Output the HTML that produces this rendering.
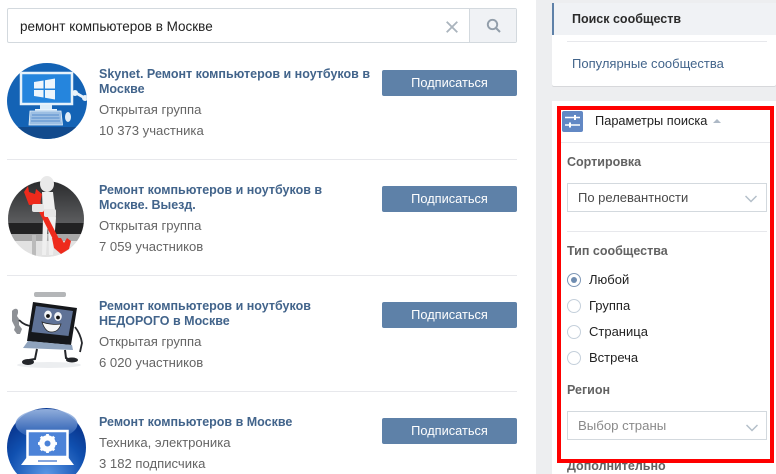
<!DOCTYPE html>
<html><head><meta charset="utf-8">
<style>
html,body{margin:0;padding:0}
body{width:776px;height:474px;overflow:hidden;background:#edeef0;position:relative;font-family:"Liberation Sans",sans-serif;font-size:12.5px}
.a{position:absolute;white-space:nowrap}
.n{position:absolute;left:99px;font-weight:bold;color:#42648b;font-size:12.5px;line-height:15px;white-space:nowrap}
.s{position:absolute;left:99px;color:#656565;font-size:13.1px;line-height:15px;white-space:nowrap}
.b{position:absolute;left:382px;width:135px;height:26px;background:#5e81a8;border-radius:2px;color:#fff;font-size:12.8px;line-height:26px;text-align:center}
.l{position:absolute;background:#e7e8ec;height:1px}
.h{position:absolute;left:567px;font-weight:bold;color:#626262;font-size:12.5px;line-height:15px;white-space:nowrap}
.sel{position:absolute;left:567px;width:198px;height:27px;background:#fff;border:1px solid #d3d9de}
.r{position:absolute;left:567px;width:14px;height:14px;box-sizing:border-box;border:1px solid #c5d0db;border-radius:50%;background:#fff}
.t{position:absolute;left:589px;color:#222;font-size:13px;line-height:15px;white-space:nowrap}
svg{position:absolute;overflow:hidden}
</style></head><body>
<div class="a" style="left:0;top:0;width:536px;height:474px;background:#fff"></div>
<div class="a" style="left:552px;top:3px;width:224px;height:83px;background:#fff;border-radius:2px;box-shadow:0 1px 0 #d7d8db"></div>
<div class="a" style="left:552px;top:101px;width:224px;height:373px;background:#fff"></div>

<div class="a" style="left:7px;top:8px;width:508px;height:33px;border:1px solid #d3d9de;background:#fff;border-radius:2px"></div>
<div class="a" style="left:469px;top:9px;width:46px;height:33px;background:#f0f2f5;border-left:1px solid #d3d9de"></div>
<div class="a" style="left:20px;top:19px;color:#222;font-size:13.5px;line-height:16px">ремонт компьютеров в Москве</div>
<svg style="left:446px;top:21px" width="12" height="12" viewBox="0 0 12 12"><path d="M.7.7L11.300 11.300M11.300.7L.7 11.300" stroke="#aab4bd" stroke-width="1.800" fill="none"/></svg>
<svg style="left:486px;top:18px" width="16" height="16" viewBox="0 0 16 16"><circle cx="6.500" cy="6.500" r="4.700" stroke="#929eaa" stroke-width="1.900" fill="none"/><path d="M10 10L14 14" stroke="#929eaa" stroke-width="2" fill="none"/></svg>

<!-- avatar 1 -->
<svg style="left:7px;top:63px" width="80" height="76" viewBox="0 0 80 76">
<defs><clipPath id="c1"><ellipse cx="40" cy="38" rx="40" ry="38"/></clipPath></defs>
<g clip-path="url(#c1)"><rect width="80" height="76" fill="#1463b5"/><rect x="0" y="64" width="80" height="12" fill="#124a8c"/>
<rect x="14" y="10" width="51" height="31" fill="#2585dd" stroke="#e6f2fb" stroke-width="2.500"/>
<path d="M27 19l9.500-1.500v8H27zM38 17.200L48 15.500v10H38zM27 27h9.500v7.500L27 33zM38 27h10v9.500l-10-1.700z" fill="#eef6fc"/>
<rect x="33" y="42" width="12" height="4" fill="#dcecf8"/><rect x="28" y="46" width="22" height="1.500" fill="#e6f2fb"/>
<path d="M23 48h31l1.500 14H22z" fill="#9dbfe3" stroke="#e6f2fb" stroke-width=".8"/>
<path d="M25 52h27M24.500 55h28M24 58h29" stroke="#3f7ec8" stroke-width=".7"/>
<ellipse cx="61" cy="54" rx="3" ry="5" fill="#e2eef8"/>
<path d="M69 30l7 4" stroke="#e8f2fa" stroke-width="2.800"/><circle cx="68" cy="30" r="3" fill="#e8f2fa"/><circle cx="78" cy="35" r="3" fill="#e8f2fa"/></g>
</svg>
<!-- avatar 2 -->
<svg style="left:7px;top:175px" width="80" height="82" viewBox="0 0 80 82">
<defs><clipPath id="c2"><circle cx="39" cy="44" r="38"/></clipPath>
<linearGradient id="sc" x1="0" y1="0" x2="0" y2="1"><stop offset="0" stop-color="#2a2b2d"/><stop offset="1" stop-color="#5c5d5f"/></linearGradient></defs>
<g clip-path="url(#c2)"><rect y="6" width="80" height="76" fill="#e8e8e8"/><rect y="6" width="80" height="42" fill="url(#sc)"/>
<rect y="48" width="80" height="11" fill="#222223"/><rect y="59" width="80" height="7" fill="#a8a8a8"/><rect y="66" width="80" height="16" fill="#e2e2e2"/>
<rect x="25" y="60" width="4" height="22" fill="#bbb"/></g>
<ellipse cx="40" cy="9" rx="7" ry="8" fill="#e9e9e9"/>
<path d="M35 17h11l3 26-3 37h-4l-1-32-2 32h-4l1-37z" fill="#efefef"/>
<path d="M27 21l24 47" stroke="#ee2a1c" stroke-width="5.500" fill="none"/>
<path d="M17 17l4-6 1 6 6 2 1-5 6 5-2 10-11 1z" fill="#ee2a1c"/>
<path d="M45 63l9 0 3 5 3-5 4 3-2 8-8 5-7-6z" fill="#ee2a1c"/>
<rect x="25" y="29" width="12" height="8" rx="2" fill="#e6e6e6"/><rect x="37" y="34" width="12" height="8" rx="2" fill="#e6e6e6"/>
</svg>
<!-- avatar 3 -->
<svg style="left:7px;top:291px" width="80" height="80" viewBox="0 0 80 80">
<rect x="27" y="1" width="32" height="5" rx="2" fill="#b4b6b8"/>
<ellipse cx="42" cy="74" rx="32" ry="3" fill="#eceef0"/>
<path d="M5 20c2-3 6-3 6 0v2l-1 3 2 3v6l3 4-2 5-3 0-3-4 1-3-3-6z" fill="#8e9196"/>
<path d="M12 29c4 4 8 6 13 6" stroke="#26282c" stroke-width="1.800" fill="none"/>
<path d="M68 36c4 5 6 10 7 16l-2 9" stroke="#26282c" stroke-width="1.800" fill="none"/>
<path d="M26 11l44 6-6 37-44-4z" fill="#15171b"/><path d="M29 15l37 5-4.500 25-37-4z" fill="#5f7296"/>
<path d="M21 50l44 4 1 5-50-2z" fill="#8fa3bd"/>
<ellipse cx="41" cy="24" rx="3.800" ry="4.500" fill="#f1f3f5"/><ellipse cx="51" cy="25.500" rx="3.800" ry="4.500" fill="#f1f3f5"/><circle cx="41" cy="25" r="1.900" fill="#111"/><circle cx="51" cy="26.500" r="1.900" fill="#111"/>
<path d="M35 31c5 2 13 3 19 2-2 6-5 8-10 8-4 0-7-4-9-10z" fill="#f6f6f6" stroke="#222" stroke-width=".7"/>
<path d="M30 58l-2 10-6 1M58 59l1 8 5 2" stroke="#24262a" stroke-width="2" fill="none"/><ellipse cx="21" cy="71" rx="6" ry="3" fill="#24262a"/><ellipse cx="65" cy="69" rx="6" ry="2.500" fill="#24262a"/>
</svg>
<!-- avatar 4 -->
<svg style="left:7px;top:407px" width="80" height="67" viewBox="0 0 80 67">
<defs><radialGradient id="g4" cx=".5" cy=".85" r=".7"><stop offset="0" stop-color="#5c98e6"/><stop offset=".7" stop-color="#1050b0"/><stop offset="1" stop-color="#0a3a94"/></radialGradient>
<linearGradient id="g5" x1="0" y1="0" x2="0" y2="1"><stop offset="0" stop-color="#a9c2e8"/><stop offset="1" stop-color="#1d55b0"/></linearGradient></defs>
<circle cx="39.500" cy="40.500" r="39.500" fill="url(#g4)"/>
<ellipse cx="39.500" cy="17" rx="31" ry="15" fill="url(#g5)" opacity=".85"/>
<path d="M20.500 24h40v26h-40z" fill="#4c83d8" stroke="#fff" stroke-width="2.500"/>
<path d="M20 50h41l6 8H14z" fill="#fff"/><rect x="31" y="53" width="19" height="2" fill="#86a6de"/>
<circle cx="40.500" cy="36.500" r="6" fill="none" stroke="#fff" stroke-width="4.500"/>
<path d="M40.500 27v19M31 36.500h19M33.800 29.800l13.400 13.400M47.200 29.800L33.800 43.200" stroke="#fff" stroke-width="2.800"/><circle cx="40.500" cy="36.500" r="3" fill="#4c83d8"/>
</svg>

<div class="n" style="top:67px">Skynet. Ремонт компьютеров и ноутбуков в<br>Москве</div>
<div class="s" style="top:102px">Открытая группа</div>
<div class="s" style="top:123px">10 373 участника</div>
<div class="b" style="top:70px">Подписаться</div>
<div class="l" style="left:7px;top:159px;width:510px"></div>

<div class="n" style="top:183px">Ремонт компьютеров и ноутбуков в<br>Москве. Выезд.</div>
<div class="s" style="top:218px">Открытая группа</div>
<div class="s" style="top:239px">7 059 участников</div>
<div class="b" style="top:186px">Подписаться</div>
<div class="l" style="left:7px;top:275px;width:510px"></div>

<div class="n" style="top:299px">Ремонт компьютеров и ноутбуков<br>НЕДОРОГО в Москве</div>
<div class="s" style="top:334px">Открытая группа</div>
<div class="s" style="top:355px">6 020 участников</div>
<div class="b" style="top:302px">Подписаться</div>
<div class="l" style="left:7px;top:391px;width:510px"></div>

<div class="n" style="top:415px">Ремонт компьютеров в Москве</div>
<div class="s" style="top:435px">Техника, электроника</div>
<div class="s" style="top:456px">3 182 подписчика</div>
<div class="b" style="top:418px">Подписаться</div>

<!-- right menu -->
<div class="a" style="left:552px;top:3px;width:222px;height:32px;background:#f0f2f5;border-left:2px solid #5e81a8"></div>
<div class="a" style="left:572px;top:12px;font-weight:bold;color:#2b2b2b;font-size:12.5px;line-height:15px">Поиск сообществ</div>
<div class="l" style="left:567px;top:41px;width:200px"></div>
<div class="a" style="left:572px;top:56px;color:#42648b;font-size:13px;line-height:15px">Популярные сообщества</div>

<svg style="left:562px;top:111px" width="21" height="21" viewBox="0 0 21 21"><rect width="21" height="21" rx="2" fill="#6288c4"/><path d="M3 6.500h15M3 14h15" stroke="#fff" stroke-width="1.500"/><path d="M13 4v5M8 11.500v5" stroke="#fff" stroke-width="2"/></svg>
<div class="a" style="left:595px;top:113px;color:#222;font-size:12.8px;line-height:15px">Параметры поиска</div>
<div class="a" style="left:713px;top:119px;width:0;height:0;border:4px solid transparent;border-top:0;border-bottom:4px solid #aeb9c6"></div>
<div class="l" style="left:561px;top:142px;width:209px"></div>

<div class="h" style="top:155px">Сортировка</div>
<div class="sel" style="top:183px"></div>
<div class="a" style="left:578px;top:190px;color:#4a4a4a;font-size:13px;line-height:15px">По релевантности</div>
<svg style="left:745px;top:195px" width="12" height="8" viewBox="0 0 12 8"><path d="M.5 1L6 6.500 11.500 1" stroke="#b4bfc9" stroke-width="1.500" fill="none"/></svg>
<div class="l" style="left:567px;top:231px;width:200px"></div>

<div class="h" style="top:244px">Тип сообщества</div>
<div class="r" style="top:273px;border-color:#7f98b7"></div>
<div class="a" style="left:571px;top:277px;width:6px;height:6px;border-radius:50%;background:#6f8cb0"></div>
<div class="t" style="top:272px">Любой</div>
<div class="r" style="top:299px"></div><div class="t" style="top:298px">Группа</div>
<div class="r" style="top:325px"></div><div class="t" style="top:324px">Страница</div>
<div class="r" style="top:351px"></div><div class="t" style="top:350px">Встреча</div>

<div class="h" style="top:383px">Регион</div>
<div class="sel" style="top:411px"></div>
<div class="a" style="left:578px;top:418px;color:#8a8a8a;font-size:13.2px;line-height:15px">Выбор страны</div>
<svg style="left:746px;top:424px" width="12" height="8" viewBox="0 0 12 8"><path d="M.5 1L6 6.500 11.500 1" stroke="#b4bfc9" stroke-width="1.500" fill="none"/></svg>
<div class="h" style="top:459px">Дополнительно</div>
<div class="a" style="left:557px;top:106px;width:209px;height:349px;border:4px solid #fe0000"></div>
</body></html>
